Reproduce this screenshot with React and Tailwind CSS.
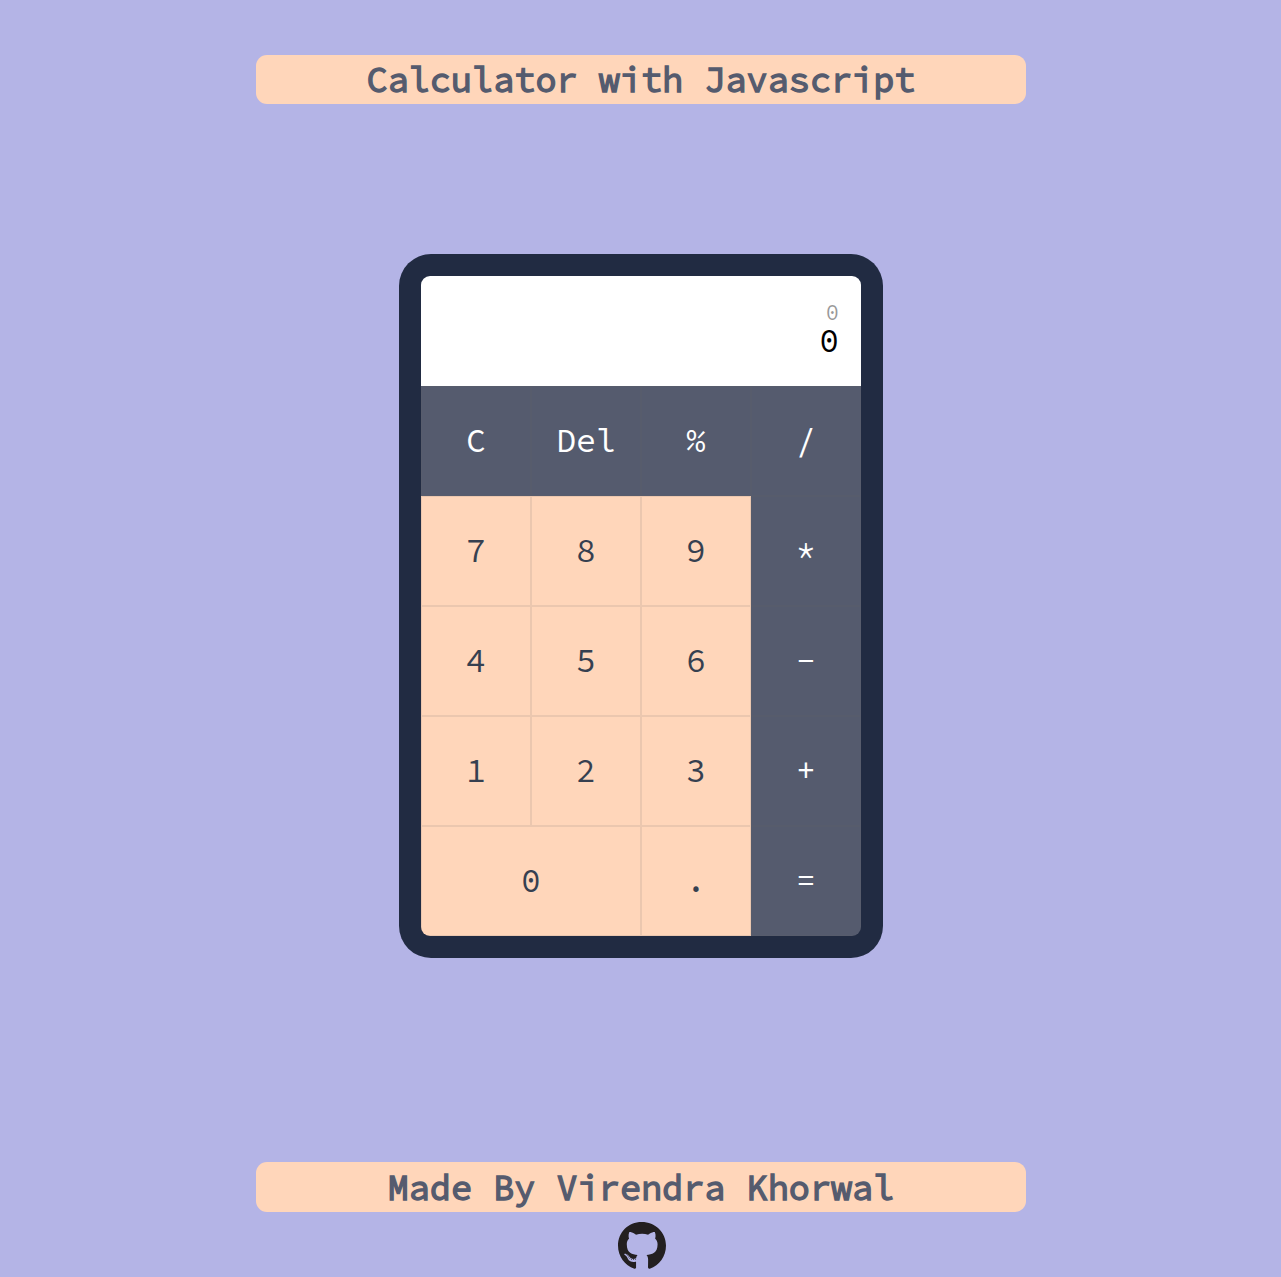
import { useState } from "react";
import { FaGithub } from "react-icons/fa";

const KEYS = [
  { label: "C", op: true },
  { label: "Del", op: true },
  { label: "%", op: true },
  { label: "/", op: true },
  { label: "7" },
  { label: "8" },
  { label: "9" },
  { label: "*", op: true },
  { label: "4" },
  { label: "5" },
  { label: "6" },
  { label: "-", op: true },
  { label: "1" },
  { label: "2" },
  { label: "3" },
  { label: "+", op: true },
  { label: "0", wide: true },
  { label: "." },
  { label: "=", op: true },
];

function Key({ label, op, wide, onPress }) {
  const tone = op ? "bg-[#555b6e] text-white" : "bg-[#ffd6ba] text-[#364050]";
  const span = wide ? "col-span-2" : "";
  return (
    <button
      type="button"
      onClick={() => onPress(label)}
      className={`flex h-[110px] items-center justify-center border border-[rgba(100,104,98,0.13)] text-[33px] leading-[42px] ${tone} ${span}`}
    >
      {label}
    </button>
  );
}

function Banner({ children, className }) {
  return (
    <div className={`w-[770px] rounded-[11px] bg-[#ffd6ba] text-center text-[35.2px] font-normal text-[#555b6e] [-webkit-text-stroke:1.4px_#555b6e] ${className}`}>
      {children}
    </div>
  );
}

export default function App() {
  const [entry, setEntry] = useState("0");
  const [history, setHistory] = useState("0");

  const press = (label) => {
    if (label === "C") {
      setEntry("0");
      setHistory("0");
    } else if (label === "Del") {
      setEntry((v) => (v.length > 1 ? v.slice(0, -1) : "0"));
    } else if (label === "=") {
      setHistory(entry);
    } else {
      setEntry((v) => (v === "0" ? label : v + label));
    }
  };

  return (
    <div className="flex h-[1277px] flex-col items-center overflow-hidden bg-[#b4b4e6] pt-[55px] pl-px font-['Source_Code_Pro','Liberation_Mono',monospace]">
      <Banner className="h-[49px] leading-[49px]">Calculator with Javascript</Banner>

      <main className="mt-[150px] w-[484px] rounded-[32px] bg-[#212b42] p-[22px]">
        <div className="overflow-hidden rounded-[9px]">
          <div className="flex h-[110px] flex-col items-end justify-center bg-white pr-[22px]">
            <div className="text-[22px] leading-[20px] text-black opacity-40">{history}</div>
            <div className="text-[33px] leading-[38px] text-black">{entry}</div>
          </div>
          <div className="grid grid-cols-4">
            {KEYS.map((key) => (
              <Key key={key.label} {...key} onPress={press} />
            ))}
          </div>
        </div>
      </main>

      <Banner className="mt-[204px] h-[50px] pt-px leading-[50px]">Made By Virendra Khorwal</Banner>
      <FaGithub className="mt-[9px] ml-[2px] h-[50px] w-[48px] text-[#231f20]" />
    </div>
  );
}
